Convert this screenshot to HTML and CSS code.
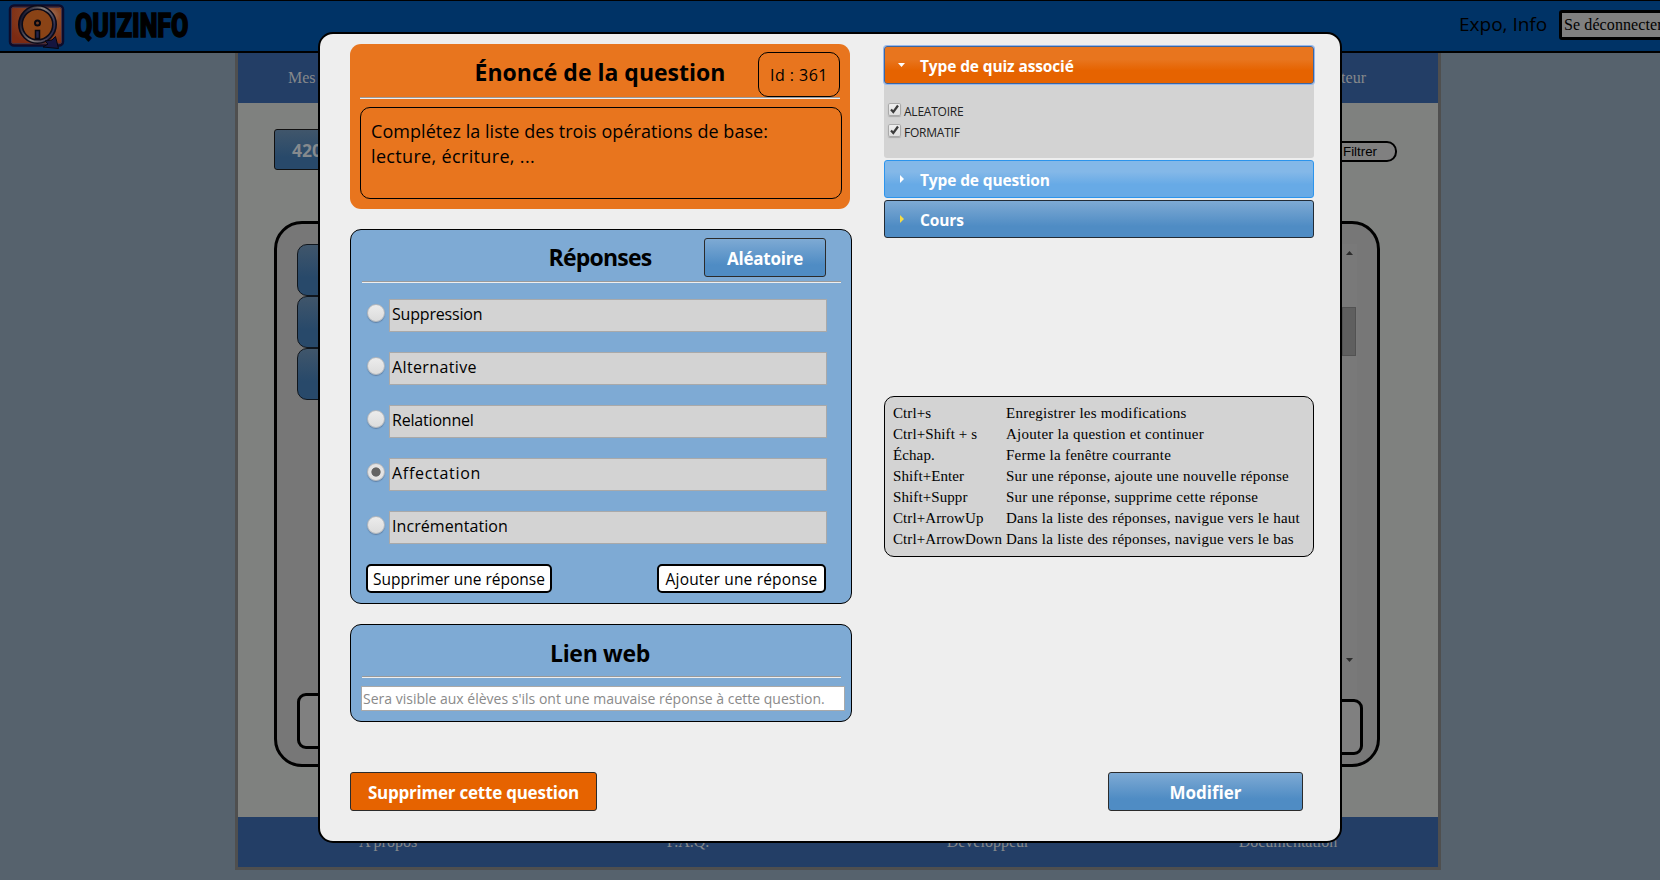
FILE: index.html
```html
<!DOCTYPE html>
<html lang="fr">
<head>
<meta charset="utf-8">
<title>Quizinfo</title>
<link rel="stylesheet" href="styles.css">
</head>
<body>
<header class="topbar">
  <svg class="logo" width="58" height="48" viewBox="0 0 58 48">
    <defs>
      <radialGradient id="lg" cx="0.7" cy="0.25" r="0.8"><stop offset="0" stop-color="#a58070"/><stop offset="0.3" stop-color="#8d4a28"/><stop offset="1" stop-color="#7c2a12"/></radialGradient>
      <linearGradient id="lr" x1="0" y1="0.3" x2="1" y2="0.7"><stop offset="0" stop-color="#12122a"/><stop offset="0.5" stop-color="#88807c"/><stop offset="1" stop-color="#25254a"/></linearGradient>
    </defs>
    <rect x="2" y="1.500" width="53" height="40" rx="4" fill="url(#lg)" stroke="#0c0c2c" stroke-width="2.500"/>
    <rect x="3.500" y="3.500" width="50" height="36" rx="2" fill="none" stroke="#47313f" stroke-width="1"/>
    <circle cx="29.500" cy="20.500" r="17" fill="#8a4316" stroke="#0b0a18" stroke-width="5"/>
    <circle cx="29.500" cy="20.500" r="17" fill="none" stroke="url(#lr)" stroke-width="1.800"/>
    <circle cx="29.500" cy="19" r="2.500" fill="#6f3b22" stroke="#07070f" stroke-width="2"/>
    <path d="M27.500 26.500h4v8h-4z" fill="#25254a" stroke="#07070f" stroke-width="1.500"/>
    <path d="M47.500 32.500 50.500 44.500 35 43l5-3 -3-3 7-1z" fill="#15153f" stroke="#06060f"/>
  </svg>
  <span class="brand"><span class="brand-text">QUIZINFO</span></span>
  <span class="user">Expo, Info</span>
  <button class="logout">Se déconnecter</button>
</header>

<main class="page">
  <nav class="nav"><span>Mes questions</span><span>Administrateur</span></nav>
  <section class="content">
    <div class="tools">
      <button class="course">420-KEF</button>
      <button class="filter">Filtrer</button>
    </div>
    <div class="panel">
      <div class="tabs"><i></i><i></i><i></i><b class="tray-left"></b></div>
      <div class="list">
        <div class="scroll"><span class="up"></span><span class="thumb"></span><span class="down"></span></div>
        <b class="tray-right"></b>
      </div>
    </div>
  </section>
  <footer class="foot"><span>A propos</span><span>F.A.Q.</span><span>Développeur</span><span>Documentation</span></footer>
</main>

<div class="modal">
  <div class="columns">
    <div class="left">
      <section class="card question">
        <h2>Énoncé de la question</h2>
        <div class="qid">Id : 361</div>
        <hr>
        <div class="statement"><span class="line-1">Complétez la liste des trois opérations de base:</span><br><span class="line-2">lecture, écriture, ...</span></div>
      </section>

      <section class="card answers">
        <h2>Réponses</h2>
        <button class="btn random">Aléatoire</button>
        <hr>
        <div class="answer"><i class="radio"></i><div class="field tight">Suppression</div></div>
        <div class="answer"><i class="radio"></i><div class="field wide">Alternative</div></div>
        <div class="answer"><i class="radio"></i><div class="field tight">Relationnel</div></div>
        <div class="answer"><i class="radio on"></i><div class="field wider">Affectation</div></div>
        <div class="answer"><i class="radio"></i><div class="field">Incrémentation</div></div>
        <div class="answer-actions">
          <button class="plain remove">Supprimer une réponse</button>
          <button class="plain add">Ajouter une réponse</button>
        </div>
      </section>

      <section class="card link">
        <h2>Lien web</h2>
        <hr>
        <div class="url">Sera visible aux élèves s'ils ont une mauvaise réponse à cette question.</div>
      </section>
    </div>

    <div class="right">
      <div class="acc open"><i></i><span>Type de quiz associé</span></div>
      <div class="acc-body">
        <div class="check"><svg width="13" height="13" viewBox="0 0 13 13"><path d="M3 6.500 5.300 9 10 2.500" fill="none" stroke="#3b3b3b" stroke-width="2.200"/></svg><span>ALEATOIRE</span></div>
        <div class="check"><svg width="13" height="13" viewBox="0 0 13 13"><path d="M3 6.500 5.300 9 10 2.500" fill="none" stroke="#3b3b3b" stroke-width="2.200"/></svg><span>FORMATIF</span></div>
      </div>
      <div class="acc hover"><i></i><span>Type de question</span></div>
      <div class="acc"><i class="gold"></i><span>Cours</span></div>

      <div class="keys">
        <span>Ctrl+s</span><span>Enregistrer les modifications</span>
        <span>Ctrl+Shift + s</span><span>Ajouter la question et continuer</span>
        <span>Échap.</span><span>Ferme la fenêtre courrante</span>
        <span>Shift+Enter</span><span>Sur une réponse, ajoute une nouvelle réponse</span>
        <span>Shift+Suppr</span><span>Sur une réponse, supprime cette réponse</span>
        <span>Ctrl+ArrowUp</span><span>Dans la liste des réponses, navigue vers le haut</span>
        <span>Ctrl+ArrowDown</span><span>Dans la liste des réponses, navigue vers le bas</span>
      </div>
    </div>
  </div>
  <div class="actions">
    <button class="btn danger">Supprimer cette question</button>
    <button class="btn save">Modifier</button>
  </div>
</div>
</body>
</html>
```
FILE: styles.css
```css
* { box-sizing: border-box; }
body { margin: 0; width: 1660px; height: 880px; overflow: hidden; background: #56626d; font-family: "Liberation Serif", serif; color: #000; }
button { font: inherit; margin: 0; padding: 0; }
i, b { display: block; }

.topbar { display: flex; align-items: flex-start; height: 53px; background: #003366; border-top: 1px solid #000; border-bottom: 2px solid #000; }
.logo { flex: none; margin: 3px 0 0 8px; }
.brand { flex: none; width: 120px; margin-left: 9px; height: 48px; }
.brand-text { display: inline-block; font: 900 34px/48px Roboto, sans-serif; -webkit-text-stroke: 1.4px #000; transform-origin: 0 50%; transform: scaleX(0.74); }
.user { flex: none; margin-left: auto; font: 19px/46px "Open Sans", sans-serif; width: 100px; white-space: nowrap; }
.logout { flex: none; margin-top: 9px; width: 112px; height: 30px; margin-right: -11px; border: 3px solid #000; border-radius: 3px; background: #808080; text-align: left; padding-left: 2px; font-size: 16px; line-height: 22px; letter-spacing: 0.1px; white-space: nowrap; overflow: hidden; }

.page { width: 1206px; height: 817px; margin-left: 235px; border: 3px solid #4f4f4f; border-top: 0; background: #7f817f; display: flex; flex-direction: column; }
.nav { height: 50px; background: #233e66; display: flex; justify-content: space-between; padding: 0 72px 0 50px; font-size: 16px; color: #85888b; }
.nav span { line-height: 49px; }
.content { flex: 1; padding: 26px 58px 0 36px; display: flex; flex-direction: column; }
.tools { display: flex; justify-content: space-between; height: 92px; margin-right: -17px; }
.course { width: 150px; height: 41px; border: 1px solid #111; border-radius: 3px; background: linear-gradient(#40566b, #28496a 70%); color: #858a8e; font: bold 17.500px/41px "Open Sans", sans-serif; text-align: left; padding-left: 17px; }
.filter { width: 120px; height: 21px; margin-top: 12px; border: 2px solid #000; border-radius: 10px; background: #808080; font: 13.300px/17px "Liberation Sans", sans-serif; text-align: right; padding-right: 18px; }
.panel { width: 1106px; height: 546px; border: 3px solid #000; border-radius: 28px; background: #777; display: flex; justify-content: space-between; padding: 20px 14px 0 20px; }
.tabs { width: 200px; }
.tabs i { height: 52px; border: 1px solid #10161d; border-radius: 10px; background: linear-gradient(#40566b, #28496a 65%); }
.tabs b { margin-top: 293px; }
.tray-left, .tray-right { height: 56px; border: 3px solid #000; border-radius: 9px; background: #808080; }
.list { width: 200px; }
.scroll { height: 455px; width: 20px; margin-left: 174px; padding: 7px 5px 0; background: #797979; }
.scroll span { display: block; }
.up { width: 7px; height: 4px; margin-left: 4px; background: #2c2c2c; clip-path: polygon(50% 0, 100% 100%, 0 100%); }
.thumb { width: 14px; height: 49px; margin: 52px 0 302px; background: #5f5f5f; border: 1px solid #525252; }
.down { width: 7px; height: 4px; margin-left: 4px; background: #2c2c2c; clip-path: polygon(0 0, 100% 0, 50% 100%); }
.foot { height: 50px; background: #233e66; display: grid; grid-template-columns: repeat(4, 300px); text-align: center; font-size: 16px; line-height: 49px; color: #85888b; }

.modal { position: absolute; left: 318px; top: 32px; width: 1024px; height: 811px; border: 2px solid #000; border-radius: 15px; background: #eee; padding: 10px 26px 0 30px; }
.columns { display: grid; grid-template-columns: 502px 430px; gap: 32px; height: 728px; }
.left { display: flex; flex-direction: column; gap: 20px; font-family: "Open Sans", sans-serif; }
.card { border: 1px solid #000; border-radius: 11px; background: #7eaad4; padding: 0 10px; position: relative; }
.card h2 { margin: 0; font-size: 23px; line-height: 55px; height: 51px; font-weight: 700; text-align: center; padding-right: 2px; white-space: nowrap; }
.card hr { margin: 0 0 0 1px; border: 0; height: 2px; width: 479px; background: linear-gradient(#9a9a9a 50%, #eee 50%); }
.question { width: 500px; height: 165px; border: 0; background: #e8751e; padding-top: 1px; }
.question h2 { height: 52px; line-height: 54px; padding: 0; }
.question hr { margin-left: 0; width: 480px; }
.qid { position: absolute; left: 408px; top: 8px; width: 82px; height: 45px; border: 1px solid #000; border-radius: 10px; font-size: 16px; line-height: 45px; letter-spacing: 0.450px; text-align: center; white-space: nowrap; }
.statement { width: 482px; height: 92px; margin-top: 8px; border: 1px solid #000; border-radius: 10px; padding: 11px 10px; font-size: 18px; line-height: 25px; white-space: nowrap; }
.line-1 { letter-spacing: 0.050px; }
.line-2 { letter-spacing: 0.340px; }
.answers { height: 375px; }
.answers h2 { letter-spacing: -0.780px; }
.btn { border: 1px solid #2b2b2b; border-radius: 3px; background: linear-gradient(#7eaad4, #4f8cc4 70%); color: #fff; font: bold 17px/39px "Open Sans", sans-serif; letter-spacing: -0.230px; height: 39px; white-space: nowrap; }
.random { position: absolute; left: 353px; top: 8px; width: 122px; }
.answers hr { margin-bottom: 16px; }
.answer { display: flex; align-items: flex-start; height: 53px; padding-left: 6px; gap: 4px; }
.radio { width: 18px; height: 18px; margin-top: 5px; border-radius: 50%; background: linear-gradient(#ececec, #dcdcdc); border: 1px solid #b4b7bb; box-shadow: 0 1px 1px rgba(60, 80, 110, .45); }
.radio.on { background: radial-gradient(circle, #646464 0 4.200px, #e4e4e4 5px); }
.field { width: 438px; height: 33px; background: #d3d3d3; border: 1px solid #a9a9a9; padding-left: 2px; font-size: 16px; line-height: 29px; letter-spacing: 0.080px; white-space: nowrap; }
.field.tight { letter-spacing: -0.190px; }
.field.wide { letter-spacing: 0.380px; }
.field.wider { letter-spacing: 0.700px; }
.answer-actions { display: flex; justify-content: space-between; padding: 0 15px 0 5px; }
.plain { height: 29px; border: 2px solid #000; border-radius: 5px; background: #fff; font: 15.500px/27px "Open Sans", sans-serif; white-space: nowrap; }
.remove { width: 186px; }
.add { width: 169px; letter-spacing: 0.190px; }
.link { height: 98px; }
.link h2 { line-height: 56px; letter-spacing: -0.310px; }
.url { width: 484px; height: 25px; margin-top: 8px; background: #fff; border: 1px solid #a9a9a9; padding-left: 1px; font-size: 14px; line-height: 24px; color: #8a8a8a; white-space: nowrap; }

.right { padding-top: 2px; }
.acc { display: flex; align-items: center; height: 38px; margin-bottom: 2px; padding-left: 13px; border: 1px solid #222b35; border-radius: 3px; background: linear-gradient(#7eaad4, #4f8cc4 70%); color: #fff; font: bold 15.500px/36px "Open Sans", sans-serif; letter-spacing: -0.130px; white-space: nowrap; }
.acc span { padding-top: 1px; }
.acc i { flex: none; width: 7px; height: 8px; margin-right: 15px; background: #fff; clip-path: polygon(2px 0, 6px 50%, 2px 100%); }
.acc i.gold { background: #f6dc45; }
.acc.open { margin-bottom: 0; border-color: #3c66a0; background: linear-gradient(#e8751e 35%, #e66300 65%); box-shadow: 0 0 0 1px #96b8ec; position: relative; }
.acc.open i { clip-path: polygon(0 2px, 100% 2px, 50% 6px); }
.acc.hover { border-color: #2c94ec; background: linear-gradient(#84b8e8 30%, #67aae6 65%); }
.acc-body { height: 74px; margin-bottom: 2px; padding: 17px 4px; background: #d3d3d3; border-radius: 0 0 3px 3px; }
.check { display: flex; height: 21px; gap: 3px; font: 12px/21px "Open Sans", sans-serif; letter-spacing: -0.230px; color: #222; align-items: flex-start; }
.check svg { margin-top: 2px; background: linear-gradient(#f0f0f0, #dedede); box-shadow: 0 0 0 1px #aaa inset, 0 1px 1px #aaa; border-radius: 2px; }
.keys { margin-top: 158px; height: 161px; border: 1px solid #000; border-radius: 10px; background: #d3d3d3; padding: 6px 8px; display: grid; grid-template-columns: 113px 1fr; grid-auto-rows: 21px; font-size: 15px; line-height: 21px; letter-spacing: 0.250px; white-space: nowrap; }
.keys span:nth-child(odd) { letter-spacing: 0.100px; }

.actions { display: flex; justify-content: space-between; padding-right: 11px; }
.danger { width: 247px; background: #e66300; }
.save { width: 195px; letter-spacing: 0; }
```
